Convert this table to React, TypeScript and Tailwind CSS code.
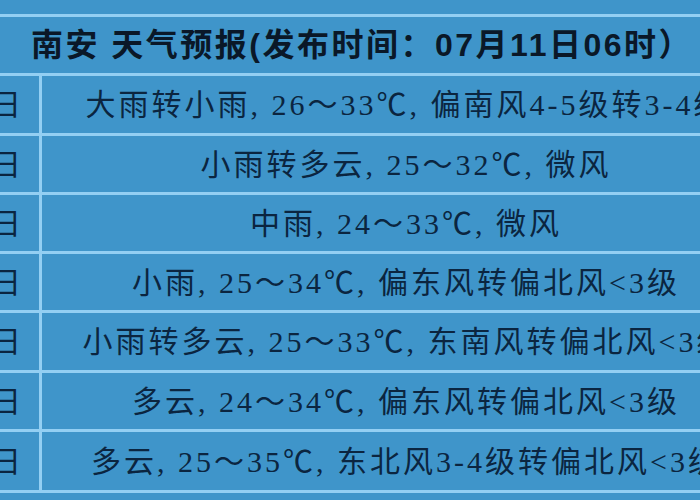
const ROWS = [
  { day: "11日", text: "大雨转小雨, 26～33℃, 偏南风4-5级转3-4级", h: "h-[60px]" },
  { day: "12日", text: "小雨转多云, 25～32℃, 微风", h: "h-[59px]" },
  { day: "13日", text: "中雨, 24～33℃, 微风", h: "h-[59px]" },
  { day: "14日", text: "小雨, 25～34℃, 偏东风转偏北风<3级", h: "h-[59px]" },
  { day: "15日", text: "小雨转多云, 25～33℃, 东南风转偏北风<3级", h: "h-[60px]" },
  { day: "16日", text: "多云, 24～34℃, 偏东风转偏北风<3级", h: "h-[59px]" },
  { day: "17日", text: "多云, 25～35℃, 东北风3-4级转偏北风<3级", h: "h-[61px]" },
];

export default function App() {
  return (
    <div className="w-[700px] h-[500px] overflow-hidden bg-[#3f95ca]">
      <div className="ml-[-60px] w-[830px] pt-[14px]">
        <div className="border-t-[3px] border-b-[3px] border-[#93cff3] h-[62px] flex items-center justify-center pl-[14px]">
          <span className="[font-family:Liberation_Sans,Noto_Sans_CJK_SC,sans-serif] font-bold text-[32px] tracking-[2.5px] text-[#0a1828] whitespace-nowrap">
            南安 天气预报(发布时间：07月11日06时）
          </span>
        </div>
        {ROWS.map((r) => (
          <div key={r.day} className={`flex border-b-[3px] border-[#93cff3] ${r.h}`}>
            <div className="w-[102px] shrink-0 border-r-[3px] border-[#93cff3] flex items-center justify-end pr-[18px] [font-family:Liberation_Serif,Noto_Sans_CJK_SC,serif] text-[30px] text-[#0b2540]">
              {r.day}
            </div>
            <div className="flex-1 flex items-center justify-center overflow-hidden">
              <span className="[font-family:Liberation_Serif,Noto_Sans_CJK_SC,serif] text-[30px] tracking-[3px] text-[#0b2540] whitespace-nowrap">
                {r.text}
              </span>
            </div>
          </div>
        ))}
      </div>
    </div>
  );
}
